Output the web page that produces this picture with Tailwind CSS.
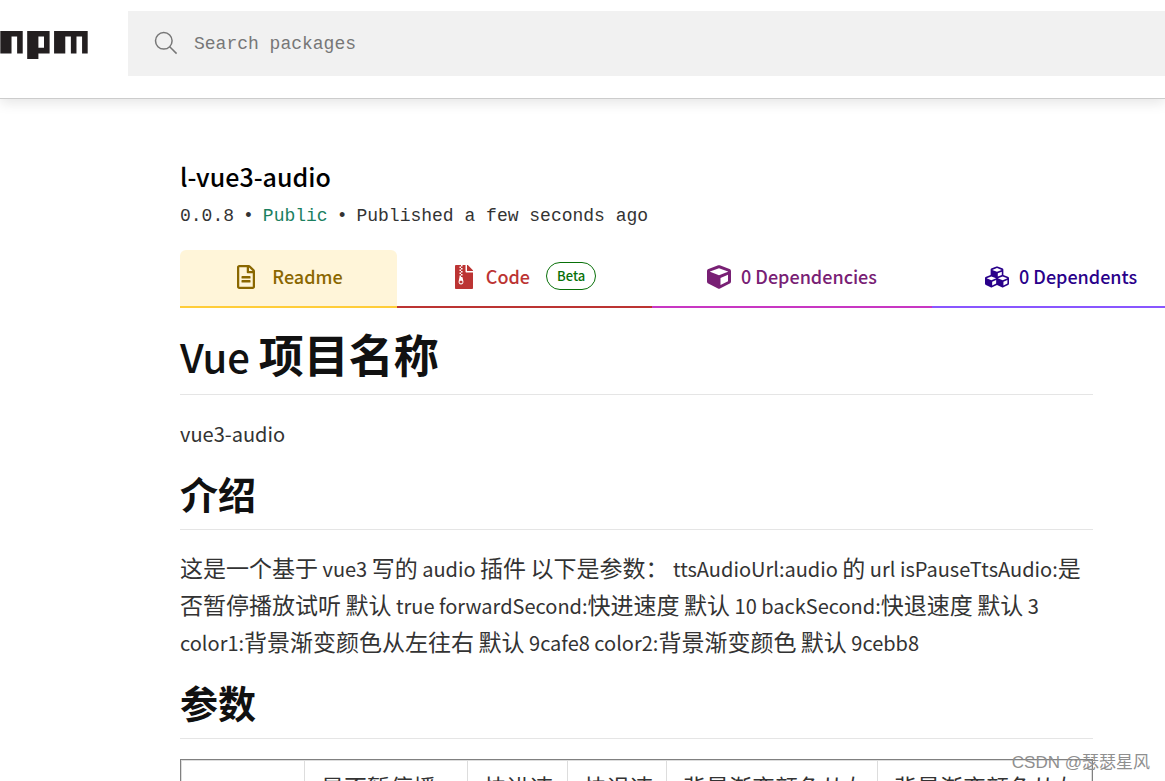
<!DOCTYPE html>
<html lang="zh-CN">
<head>
<meta charset="utf-8">
<meta name="viewport" content="width=device-width, initial-scale=1">
<title>l-vue3-audio - npm</title>
<script src="https://cdn.jsdelivr.net/npm/@tailwindcss/browser@4"></script>
</head>
<body class="relative h-screen overflow-hidden bg-white font-['Noto_Sans_CJK_SC','Noto_Sans',sans-serif] text-[#333]">

<header class="flex items-start gap-10 border-b border-[#ccc] pt-[11px] pb-[22px] shadow-[0_4px_12px_rgba(0,0,0,0.1)]">
  <a href="#" aria-label="npm" class="mt-5 block shrink-0">
    <svg class="block h-7 w-[88px]" viewBox="0 0 780 250" fill="#231f20"><path d="M240,250h100v-50h100V0H240V250z M340,50h50v100h-50V50z M480,0v200h100V50h50v150h50V50h50v150h50V0H480z M0,200h100V50h50v150h50V0H0V200z"/></svg>
  </a>
  <form class="flex h-[65px] flex-1 items-center gap-4 bg-[#f1f1f1] pl-[26px]">
    <svg class="mb-0.5 size-6 shrink-0" viewBox="0 0 24 24" fill="none" stroke="#777" stroke-width="1.5"><circle cx="9.8" cy="9.8" r="8.3"/><path d="M15.7 15.7L22.6 22.6"/></svg>
    <label for="q" class="sr-only">Search packages</label>
    <input id="q" type="search" placeholder="Search packages" class="h-full min-w-0 flex-1 bg-transparent font-['Liberation_Mono',monospace] text-[18px] text-[#333] outline-none placeholder:text-[#777]">
  </form>
</header>

<main class="pt-[58px] pl-[180px]">
  <h1 class="text-[25px] leading-[38px] font-medium text-black">l-vue3-audio</h1>
  <p class="mt-0.5 flex gap-[9px] font-['Liberation_Mono',monospace] text-[18px] leading-[38px]">
    <span>0.0.8</span><span>•</span><span class="text-[#1b7f5f]">Public</span><span>•</span><span>Published a few seconds ago</span>
  </p>

  <nav class="mt-[15px] flex text-[18px] leading-7 font-medium">
    <a href="#readme" class="flex h-[58px] w-[217px] shrink-0 items-center justify-center gap-4 rounded-t-md border-b-2 border-[#ffcd3a] bg-[#fff5d9] pb-0.5 pl-0.5 text-[#8a6700]">
      <svg class="h-6 w-5" viewBox="0 0 384 512" fill="currentColor"><path d="M288 248v28c0 6.6-5.4 12-12 12H108c-6.6 0-12-5.4-12-12v-28c0-6.6 5.4-12 12-12h168c6.6 0 12 5.4 12 12zm-12 72H108c-6.6 0-12 5.4-12 12v28c0 6.6 5.4 12 12 12h168c6.6 0 12-5.4 12-12v-28c0-6.6-5.4-12-12-12zm108-188.1V464c0 26.5-21.5 48-48 48H48c-26.5 0-48-21.5-48-48V48C0 21.5 21.5 0 48 0h204.1C264.8 0 277 5.1 286 14.1L369.9 98c9 8.9 14.1 21.2 14.1 33.9zm-128-80V128h76.1L256 51.9zM336 464V176H232c-13.3 0-24-10.7-24-24V48H48v416h288z"/></svg>
      <span class="pb-0.5">Readme</span>
    </a>
    <a href="#code" class="flex h-[58px] w-[255px] shrink-0 items-center justify-center border-b-2 border-[#bc3433] pb-0.5 pl-px text-[#bc3433]">
      <svg class="h-6 w-5" viewBox="0 0 384 512" fill="currentColor"><path d="M377 105L279.1 7c-4.5-4.5-10.6-7-17-7H256v128h128v-6.1c0-6.3-2.5-12.4-7-16.9zM128.4 336c-17.9 0-32.4 12.1-32.4 27 0 15 14.6 27 32.5 27s32.4-12.1 32.4-27-14.6-27-32.5-27zM224 136V0h-63.6v32h-32V0H24C10.7 0 0 10.7 0 24v464c0 13.3 10.7 24 24 24h336c13.3 0 24-10.7 24-24V160H248c-13.2 0-24-10.8-24-24zM95.9 32h32v32h-32zm32.3 384c-33.2 0-58-30.4-51.4-62.9L96.4 256v-32h32v-32h-32v-32h32v-32h-32V96h32V64h32v32h-32v32h32v32h-32v32h32v32h-32v32h22.1c5.7 0 10.7 4.1 11.8 9.7l17.3 87.7c6.4 32.4-18.4 62.6-51.4 62.6z"/></svg>
      <span class="ml-3 pb-0.5">Code</span>
      <span class="mb-0.5 ml-4 rounded-full border border-[#087008] px-2.5 text-[13px] leading-[26px] text-[#087008]">Beta</span>
    </a>
    <a href="#dependencies" class="flex h-[58px] w-[280px] shrink-0 items-center justify-center gap-2.5 border-b-2 border-[#c836c3] pb-0.5 text-[#782074]">
      <svg class="size-6" viewBox="0 0 512 512" fill="currentColor"><path d="M239.1 6.3l-208 78c-18.7 7-31.1 25-31.1 45v225.1c0 18.2 10.3 34.8 26.5 42.9l208 104c13.5 6.8 29.4 6.8 42.9 0l208-104c16.3-8.1 26.5-24.8 26.5-42.9V129.3c0-20-12.4-37.9-31.1-44.9l-208-78C262 2.2 250 2.2 239.1 6.3zM256 68.4l192 72v1.1l-192 78-192-78v-1.1l192-72zm32 356V275.5l160-65v133.9l-160 80z"/></svg>
      <span class="pb-0.5">0 Dependencies</span>
    </a>
    <a href="#dependents" class="flex h-[58px] min-w-0 flex-1 items-center gap-2.5 border-b-2 border-[#8956ff] pb-0.5 pl-[53px] whitespace-nowrap text-[#29008a]">
      <svg class="size-6 shrink-0" viewBox="0 0 512 512" fill="currentColor"><path d="M488.6 250.2L392 214V105.5c0-15-9.3-28.4-23.4-33.7l-100-37.5c-8.1-3.1-17.1-3.1-25.3 0l-100 37.5c-14.1 5.3-23.4 18.7-23.4 33.7V214l-96.6 36.2C9.3 255.5 0 268.9 0 283.9V394c0 13.6 7.7 26.1 19.9 32.2l100 50c10.1 5.1 22.1 5.1 32.2 0l103.9-52 103.9 52c10.1 5.1 22.1 5.1 32.2 0l100-50c12.2-6.1 19.9-18.6 19.9-32.2V283.9c0-15-9.3-28.4-23.4-33.7zM358 214.8l-85 31.9v-68.2l85-37v73.3zM154 104.1l102-38.2 102 38.2v.6l-102 41.4-102-41.4v-.6zm84 291.1l-85 42.5v-79.1l85-38.8v75.4zm0-112l-102 41.4-102-41.4v-.6l102-38.2 102 38.2v.6zm240 112l-85 42.5v-79.1l85-38.8v75.4zm0-112l-102 41.4-102-41.4v-.6l102-38.2 102 38.2v.6z"/></svg>
      <span class="pb-0.5">0 Dependents</span>
    </a>
  </nav>

  <article id="readme" class="mr-[72px] pt-[19px] text-[20px] leading-[37px]">
    <h1 class="border-b border-[#e5e5e5] pb-[9px] text-[40px] leading-[58px] font-medium text-[#111]">Vue <span class="text-[45px] leading-none font-bold">项目名称</span></h1>
    <p class="mt-5">vue3-audio</p>
    <h2 class="mt-4 border-b border-[#e5e5e5] pb-[11px] text-[38px] leading-[50px] font-bold text-[#111]">介绍</h2>
    <p class="mt-5 whitespace-nowrap"><span class="text-[23px] leading-none">这是一个基于</span> vue3 <span class="text-[23px] leading-none">写的</span> audio <span class="text-[23px] leading-none">插件</span> <span class="text-[23px] leading-none">以下是参数：</span> ttsAudioUrl:audio <span class="text-[23px] leading-none">的</span> url isPauseTtsAudio:<span class="text-[23px] leading-none">是</span><br>
    <span class="text-[23px] leading-none">否暂停播放试听</span> <span class="text-[23px] leading-none">默认</span> true forwardSecond:<span class="text-[23px] leading-none">快进速度</span> <span class="text-[23px] leading-none">默认</span> 10 backSecond:<span class="text-[23px] leading-none">快退速度</span> <span class="text-[23px] leading-none">默认</span> 3<br>
    color1:<span class="text-[23px] leading-none">背景渐变颜色从左往右</span> <span class="text-[23px] leading-none">默认</span> 9cafe8 color2:<span class="text-[23px] leading-none">背景渐变颜色</span> <span class="text-[23px] leading-none">默认</span> 9cebb8</p>
    <h2 class="mt-4 border-b border-[#e5e5e5] pb-[11px] text-[38px] leading-[50px] font-bold text-[#111]">参数</h2>
    <div class="mt-5 border border-[#808080]">
      <table class="w-full table-fixed border-collapse text-left align-top text-[23px]">
        <colgroup><col class="w-[123px]"><col class="w-[163px]"><col class="w-[100px]"><col class="w-[99px]"><col class="w-[211px]"><col></colgroup>
        <tbody>
          <tr class="align-top">
            <td class="border border-[#ddd] py-[7px] pl-4"></td>
            <td class="border border-[#ddd] px-4 py-[7px]">是否暂停播放试听</td>
            <td class="border border-[#ddd] py-[7px] pl-4">快进速度</td>
            <td class="border border-[#ddd] py-[7px] pl-4">快退速度</td>
            <td class="border border-[#ddd] py-[7px] pl-4">背景渐变颜色从左往右</td>
            <td class="border border-[#ddd] py-[7px] pl-4">背景渐变颜色从左往右</td>
          </tr>
        </tbody>
      </table>
    </div>
  </article>
</main>

<div class="absolute right-[15px] bottom-1.5 text-[17px] leading-6 text-[#8f8f8f]"><span class="font-['Liberation_Sans',sans-serif]">CSDN @</span>瑟瑟星风</div>
</body>
</html>
